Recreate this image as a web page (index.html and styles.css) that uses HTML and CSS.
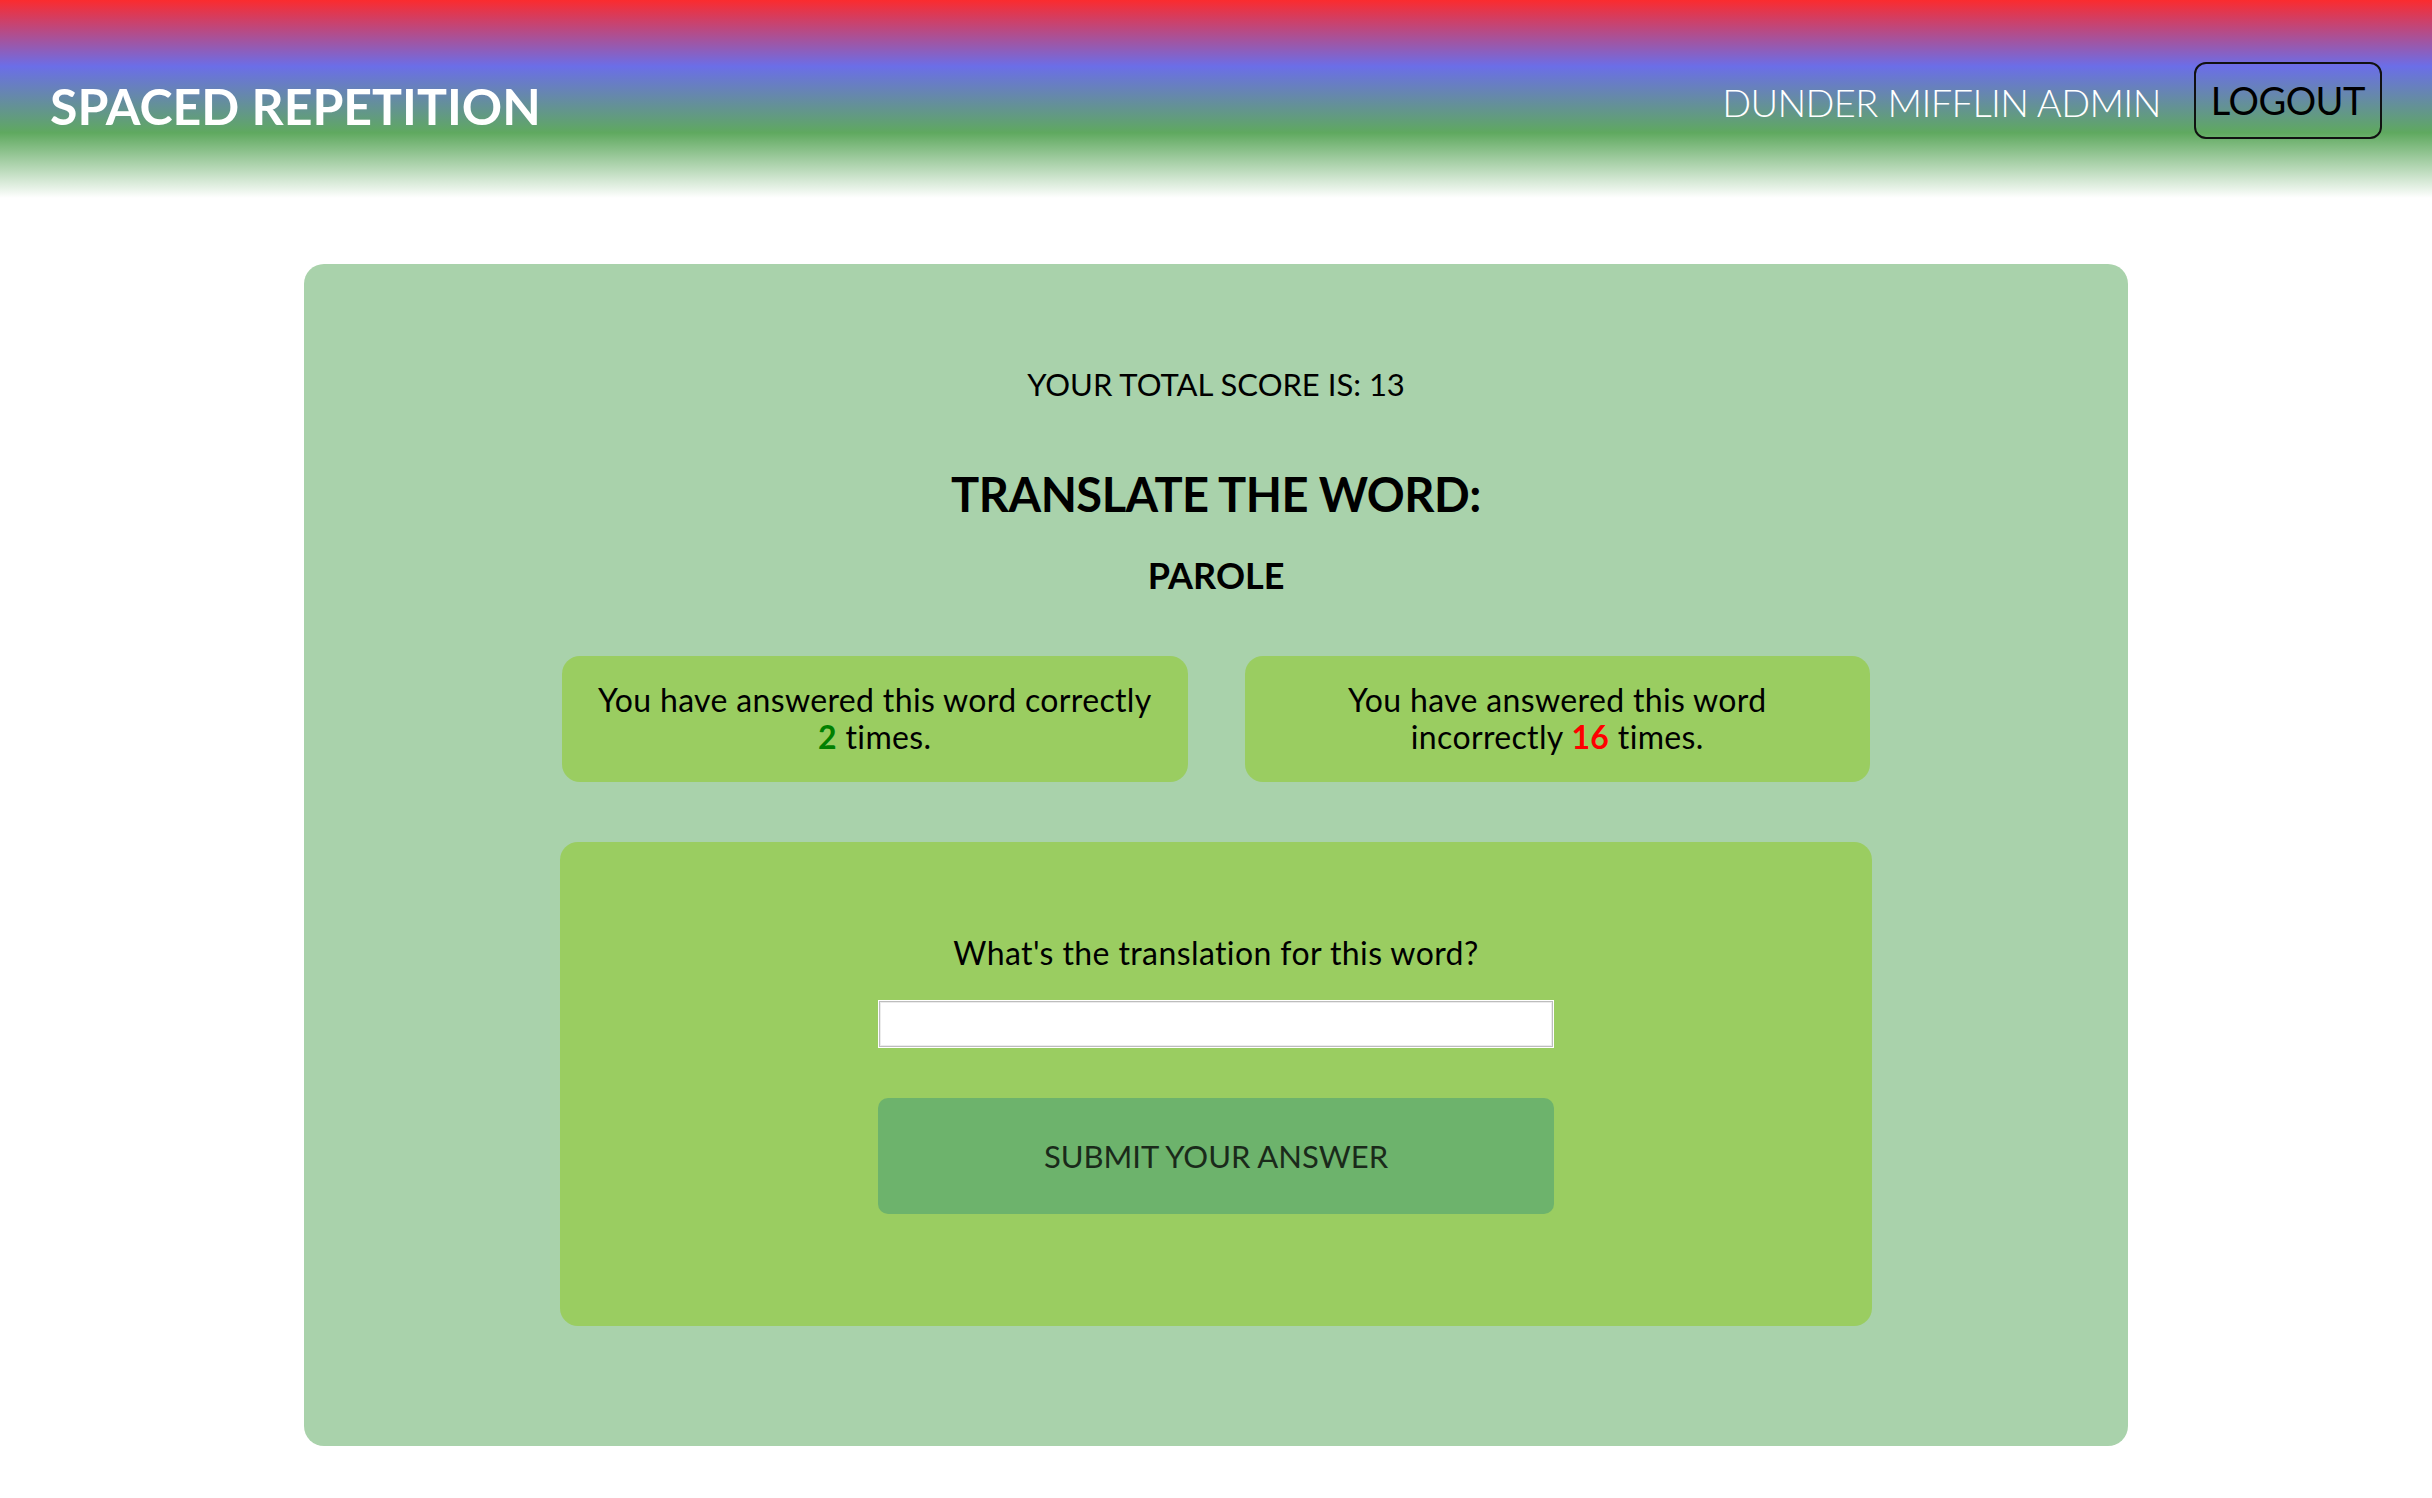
FILE: index.html
```html
<!DOCTYPE html>
<html lang="en">
<head>
<meta charset="utf-8">
<title>Spaced Repetition</title>
<link rel="stylesheet" href="styles.css">
</head>
<body>
<header class="top-bar">
  <h1 class="brand">SPACED REPETITION</h1>
  <nav class="user-nav">
    <span class="user-name">DUNDER MIFFLIN ADMIN</span>
    <button class="logout-btn" type="button">LOGOUT</button>
  </nav>
</header>
<main class="learn-card">
  <p class="total-score">YOUR TOTAL SCORE IS: 13</p>
  <h2 class="translate-title">TRANSLATE THE WORD:</h2>
  <h3 class="word">PAROLE</h3>
  <section class="stats">
    <div class="stat-box">You have answered this word correctly <span class="count-correct">2</span> times.</div>
    <div class="stat-box">You have answered this word incorrectly <span class="count-wrong">16</span> times.</div>
  </section>
  <form class="answer-form">
    <label class="answer-label" for="guess">What's the translation for this word?</label>
    <input class="answer-input" id="guess" type="text">
    <button class="submit-btn" type="button">SUBMIT YOUR ANSWER</button>
  </form>
</main>
</body>
</html>
```
FILE: styles.css
```css
* { box-sizing: border-box; }
html, body { margin: 0; padding: 0; }
body {
  font-family: Lato, "Open Sans", sans-serif;
  color: #000;
  background: #fff;
  padding-bottom: 52px;
}
.top-bar {
  height: 198px;
  display: flex;
  align-items: center;
  justify-content: space-between;
  padding: 0 50px;
  background: linear-gradient(to bottom, #fb2b2e 0%, #6b6ee8 33.5%, #5fa95f 67%, #ffffff 100%);
}
.brand {
  margin: 14px 0 0;
  font-size: 50px;
  line-height: 60px;
  font-weight: 700;
  color: #fff;
}
.user-nav {
  display: flex;
  align-items: center;
  gap: 33px;
  margin-top: 3px;
}
.user-name {
  font-size: 38px;
  font-weight: 300;
  letter-spacing: -0.6px;
  color: #fff;
  line-height: 48px;
  margin-top: 2px;
}
.logout-btn {
  font-family: inherit;
  font-size: 38px;
  line-height: 48px;
  font-weight: 400;
  letter-spacing: -0.5px;
  color: #000;
  background: transparent;
  border: 2px solid #111;
  border-radius: 12px;
  padding: 12px 15px 13px;
}
.learn-card {
  width: 75%;
  margin: 66px auto 0;
  background: #a9d2ab;
  border-radius: 20px;
  padding: 100px 256px 120px;
  text-align: center;
}
.total-score {
  margin: 0;
  font-size: 31px;
  line-height: 40px;
  font-weight: 400;
}
.translate-title {
  margin: 60px 0 0;
  font-size: 47px;
  letter-spacing: -0.5px;
  line-height: 60px;
  font-weight: 700;
}
.word {
  margin: 30px 0 0;
  font-size: 36px;
  line-height: 42px;
  font-weight: 700;
}
.stats {
  margin-top: 60px;
  display: grid;
  grid-template-columns: 1fr 1fr;
  column-gap: 57px;
  padding: 0 2px;
}
.stat-box {
  background: #9acd61;
  border-radius: 18px;
  padding: 25px 32px 27px;
  font-size: 32px;
  letter-spacing: 0.35px;
  line-height: 37px;
}
.count-correct { color: #008000; font-weight: 700; }
.count-wrong { color: #ff0000; font-weight: 700; }
.answer-form {
  margin-top: 60px;
  background: #9acd61;
  border-radius: 18px;
  padding: 92px 0 112px;
  display: flex;
  flex-direction: column;
  align-items: center;
}
.answer-label {
  font-size: 32px;
  letter-spacing: 0.4px;
  line-height: 37px;
}
.answer-input {
  margin-top: 29px;
  width: 676px;
  height: 48px;
  background: #fff;
  border: 1px solid #fff;
  box-shadow: inset 0 0 0 1px #bdbdbd, inset 0 0 0 2px #ececec;
  font-family: inherit;
  font-size: 24px;
}
.submit-btn {
  margin-top: 50px;
  width: 676px;
  height: 116px;
  background: #6db36c;
  border: none;
  border-radius: 10px;
  font-family: inherit;
  font-size: 31px;
  color: #1a2a1a;
}
```
